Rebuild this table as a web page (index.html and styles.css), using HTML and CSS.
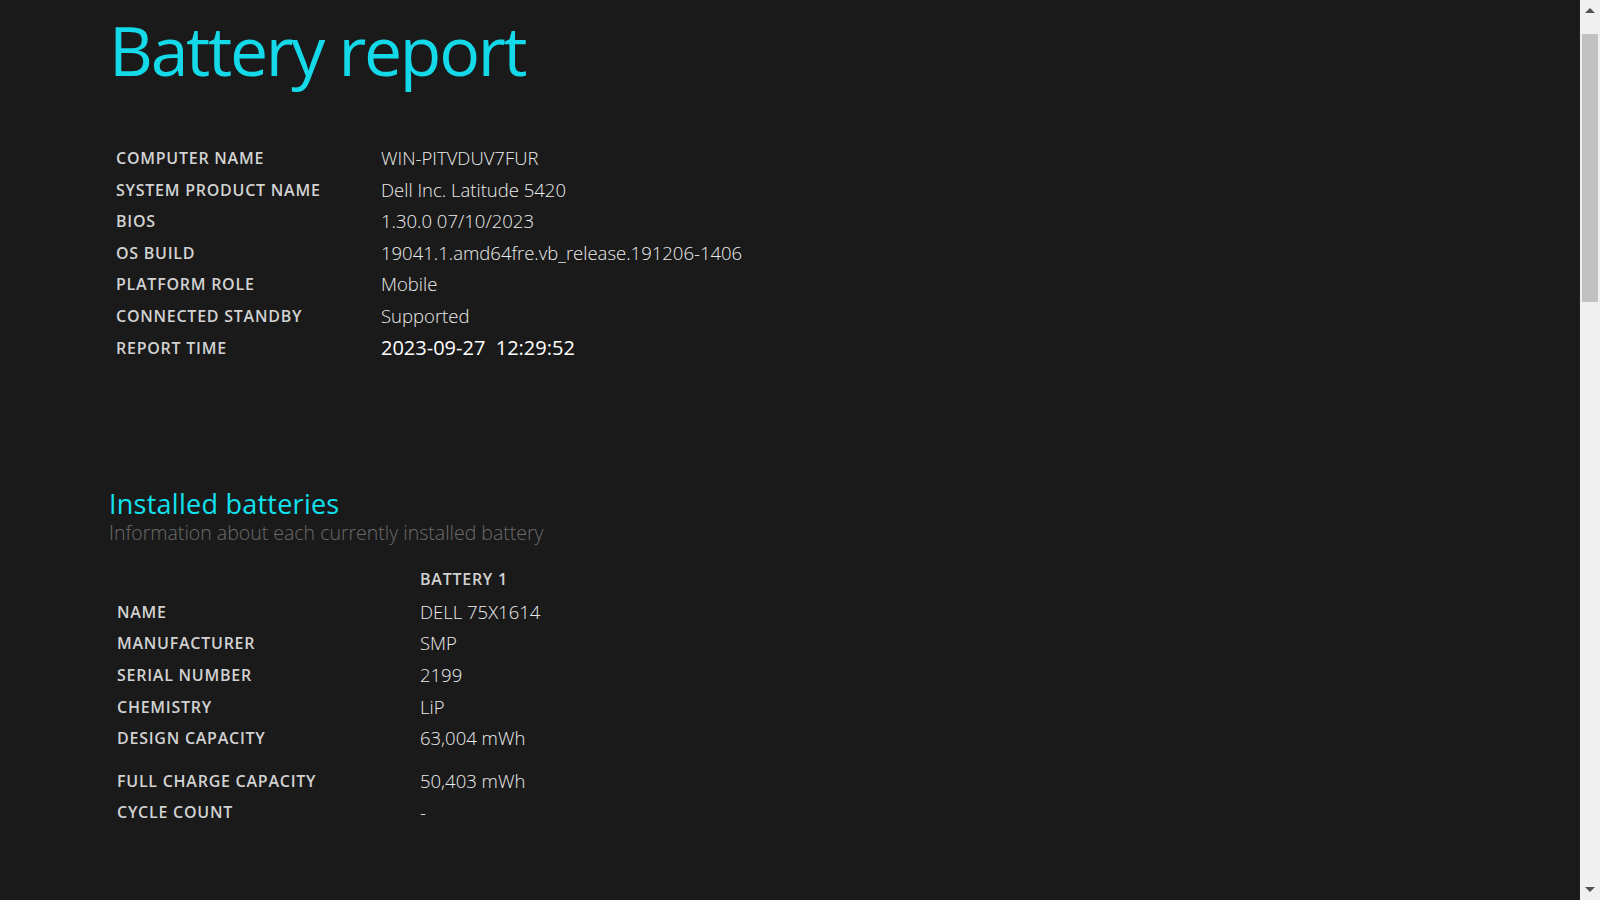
FILE: index.html
```html
<!DOCTYPE html>
<html lang="en">
<head>
<meta charset="utf-8">
<title>Battery report</title>
<link rel="stylesheet" href="styles.css">
</head>
<body>
<div class="page">
  <main class="content">
    <h1 class="title">Battery report</h1>

    <div class="info">
      <div class="label">Computer name</div><div class="value">WIN-PITVDUV7FUR</div>
      <div class="label">System product name</div><div class="value">Dell Inc. Latitude 5420</div>
      <div class="label">BIOS</div><div class="value">1.30.0 07/10/2023</div>
      <div class="label">OS build</div><div class="value">19041.1.amd64fre.vb_release.191206-1406</div>
      <div class="label">Platform role</div><div class="value">Mobile</div>
      <div class="label">Connected standby</div><div class="value">Supported</div>
      <div class="label">Report time</div><div class="value time">2023-09-27  12:29:52</div>
    </div>

    <section class="batteries">
      <h2 class="section-title">Installed batteries</h2>
      <p class="section-desc">Information about each currently installed battery</p>

      <div class="bat">
        <div class="blank"></div><div class="label colhead">Battery 1</div>
        <div class="label">Name</div><div class="value">DELL 75X1614</div>
        <div class="label">Manufacturer</div><div class="value">SMP</div>
        <div class="label">Serial number</div><div class="value">2199</div>
        <div class="label">Chemistry</div><div class="value">LiP</div>
        <div class="label">Design capacity</div><div class="value">63,004 mWh</div>
        <div class="label gap">Full charge capacity</div><div class="value gap">50,403 mWh</div>
        <div class="label">Cycle count</div><div class="value">-</div>
      </div>
    </section>
  </main>

  <div class="scrollbar" aria-hidden="true">
    <div class="sb-btn"><span class="arrow up"></span></div>
    <div class="sb-track"><div class="sb-thumb"></div></div>
    <div class="sb-btn"><span class="arrow down"></span></div>
  </div>
</div>
</body>
</html>
```

FILE: styles.css
```css
html, body {
  margin: 0;
  padding: 0;
  height: 100%;
  overflow: hidden;
}

body {
  background: #1a1a1a;
  color: #e6e6e6;
  font-family: "Open Sans", "Noto Sans", sans-serif;
}

.page {
  display: flex;
  height: 900px;
}

.content {
  flex: 1;
  padding: 8px 0 0 106px;
}

.title {
  margin: 2px 0 0 3px;
  font-size: 68px;
  line-height: 80px;
  font-weight: 400;
  color: #13d9e9;
  letter-spacing: -2.3px;
}

.info {
  margin: 53px 0 0 10px;
  display: grid;
  grid-template-columns: 265px auto;
  grid-auto-rows: 31.6px;
  align-items: center;
  justify-content: start;
}

.label {
  font-size: 16px;
  font-weight: 600;
  text-transform: uppercase;
  letter-spacing: 0.75px;
  color: #d2d2d2;
  line-height: 31.6px;
}

.value {
  font-size: 18.5px;
  font-weight: 300;
  color: #ececec;
  line-height: 29.6px;
  padding-bottom: 2px;
  white-space: pre;
}

.value.time {
  color: #ffffff;
  font-size: 20px;
  font-weight: 500;
}

.batteries {
  margin-top: 122px;
}

.section-title {
  margin: 0 0 0 3px;
  font-size: 27px;
  line-height: 36px;
  font-weight: 400;
  letter-spacing: 0.25px;
  color: #11e1ef;
}

.section-desc {
  margin: -1px 0 0 3px;
  font-size: 19.5px;
  line-height: 24px;
  font-weight: 300;
  color: #6b6b6b;
}

.bat {
  margin: 19px 0 0 11px;
  display: grid;
  grid-template-columns: 303px auto;
  align-items: end;
  justify-content: start;
}

.bat .colhead {
  margin-bottom: 1px;
}

.bat .gap {
  margin-top: 11px;
}

.scrollbar {
  width: 21px;
  display: flex;
  flex-direction: column;
  background: #f0f0f0;
  border-left: 1px solid #1f1f1f;
  box-sizing: border-box;
}

.sb-btn {
  height: 21px;
  display: flex;
  align-items: center;
  justify-content: center;
}

.sb-track {
  flex: 1;
  padding: 13px 2px 0 2px;
}

.sb-thumb {
  height: 268px;
  background: #c1c1c1;
}

.arrow {
  width: 0;
  height: 0;
  border-left: 5px solid transparent;
  border-right: 5px solid transparent;
}

.arrow.up {
  border-bottom: 5px solid #505050;
}

.arrow.down {
  border-top: 5px solid #505050;
}
```
